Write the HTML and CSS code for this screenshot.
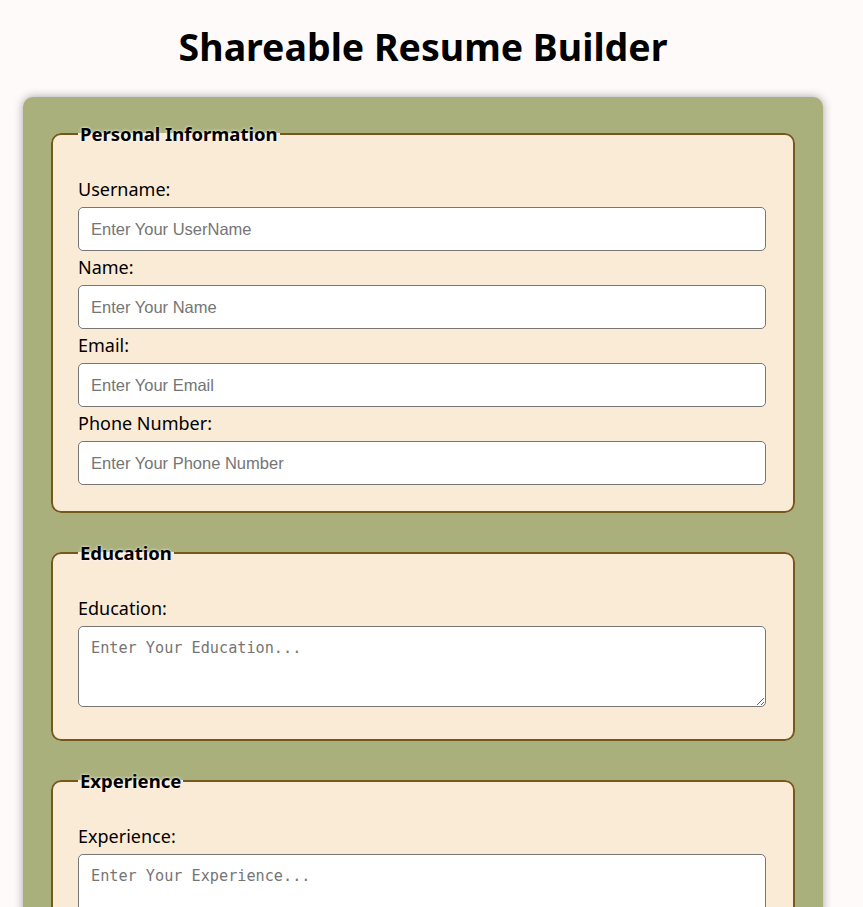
FILE: index.html
```html
<!DOCTYPE html>
<html lang="en">
<head>
<meta charset="UTF-8">
<title>Shareable Resume Builder</title>
<link rel="stylesheet" href="styles.css">
</head>
<body>
<h1 class="title">Shareable Resume Builder</h1>
<div class="form-container">
  <form class="resume-form">
    <fieldset class="section">
      <legend class="section-title">Personal Information</legend>
      <label class="field-label" for="username">Username:</label>
      <input class="field-input" type="text" id="username" placeholder="Enter Your UserName">
      <label class="field-label" for="name">Name:</label>
      <input class="field-input" type="text" id="name" placeholder="Enter Your Name">
      <label class="field-label" for="email">Email:</label>
      <input class="field-input" type="email" id="email" placeholder="Enter Your Email">
      <label class="field-label" for="phone">Phone Number:</label>
      <input class="field-input" type="tel" id="phone" placeholder="Enter Your Phone Number">
    </fieldset>
    <fieldset class="section">
      <legend class="section-title">Education</legend>
      <label class="field-label" for="education">Education:</label>
      <textarea class="field-area" id="education" placeholder="Enter Your Education..."></textarea>
    </fieldset>
    <fieldset class="section">
      <legend class="section-title">Experience</legend>
      <label class="field-label" for="experience">Experience:</label>
      <textarea class="field-area" id="experience" placeholder="Enter Your Experience..."></textarea>
    </fieldset>
    <fieldset class="section">
      <legend class="section-title">Skills</legend>
      <label class="field-label" for="skills">Skills:</label>
      <textarea class="field-area" id="skills" placeholder="Enter Your Skills..."></textarea>
    </fieldset>
  </form>
</div>
</body>
</html>
```
FILE: styles.css
```css
body {
  margin: 0;
  padding-right: 17px;
  background: #fffafa;
  font-family: "Noto Sans", "Open Sans", sans-serif;
  color: #000;
}
.title {
  text-align: center;
  font-size: 37.5px;
  font-weight: bold;
  margin: 20px 0 24px;
  line-height: 53px;
}
.form-container {
  max-width: 800px;
  box-sizing: border-box;
  margin: 0 auto 40px;
  background: #aab07c;
  border-radius: 10px;
  padding: 23px 28px 1px;
  box-shadow: 0 0 10px rgba(0, 0, 0, 0.35);
}
.section {
  margin: 0 0 26px;
  border: 2px solid #75591c;
  border-radius: 10px;
  background: #faebd7;
  padding: 25px 27px 26px 25px;
}
.section-title {
  font-weight: bold;
  font-size: 18.5px;
  line-height: 28px;
  padding: 0 2px;
  text-shadow: 0 0 3px #fff;
}
.field-label {
  display: block;
  font-size: 18px;
  line-height: 24px;
  margin: 4px 0 6px;
}
.field-input {
  display: block;
  width: 100%;
  box-sizing: border-box;
  height: 44px;
  padding: 0 12px;
  border: 1px solid #767676;
  border-radius: 5px;
  background: #fff;
  font-family: "Liberation Sans", Arial, sans-serif;
  font-size: 16.5px;
  color: #000;
}
.field-input::placeholder {
  color: #757575;
}
.field-area {
  display: block;
  width: 100%;
  box-sizing: border-box;
  height: 81px;
  padding: 12px;
  margin-bottom: 6px;
  border: 1px solid #767676;
  border-radius: 5px;
  background: #fff;
  font-family: "DejaVu Sans Mono", "Liberation Mono", monospace;
  font-size: 15.2px;
  color: #000;
}
.field-area::placeholder {
  color: #757575;
}
```
